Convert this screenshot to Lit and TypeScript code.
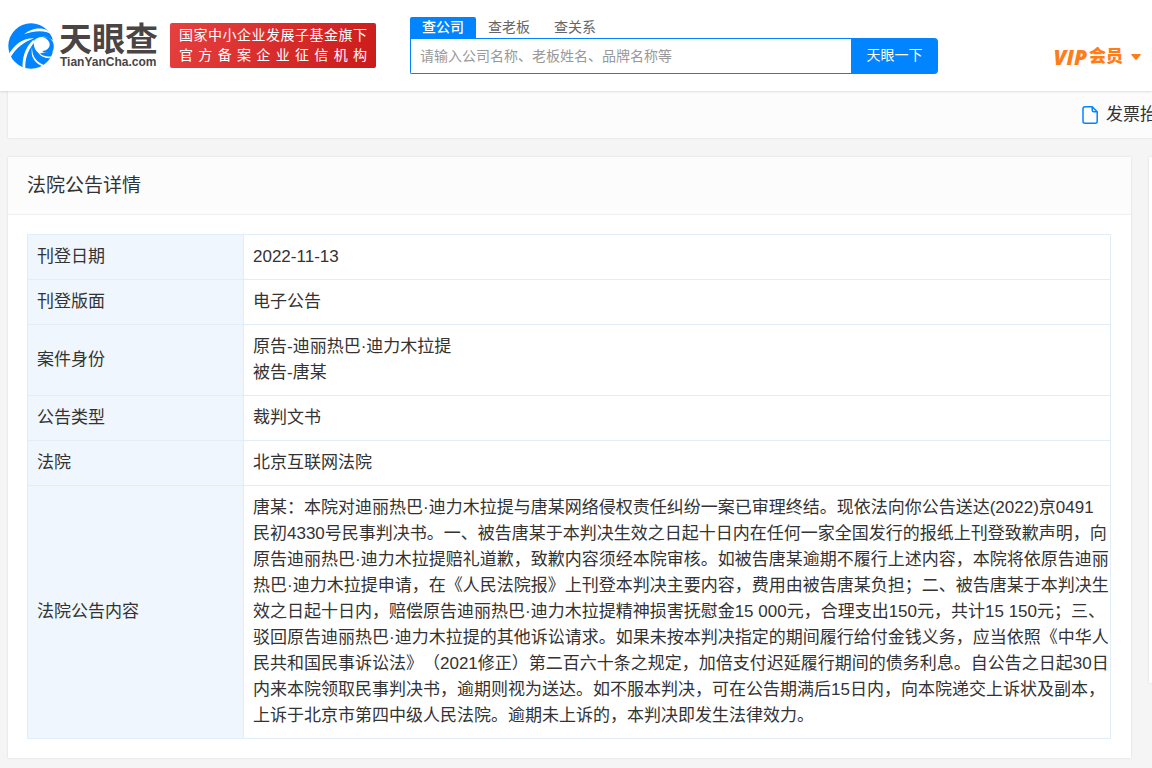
import { LitElement, html, css } from "lit";
import { customElement } from "lit/decorators.js";

interface Row {
  label: string;
  lines: string[];
}

const ROWS: Row[] = [
  { label: "刊登日期", lines: ["2022-11-13"] },
  { label: "刊登版面", lines: ["电子公告"] },
  { label: "案件身份", lines: ["原告-迪丽热巴·迪力木拉提", "被告-唐某"] },
  { label: "公告类型", lines: ["裁判文书"] },
  { label: "法院", lines: ["北京互联网法院"] },
  {
    label: "法院公告内容",
    lines: [
      "唐某：本院对迪丽热巴·迪力木拉提与唐某网络侵权责任纠纷一案已审理终结。现依法向你公告送达(2022)京0491",
      "民初4330号民事判决书。一、被告唐某于本判决生效之日起十日内在任何一家全国发行的报纸上刊登致歉声明，向",
      "原告迪丽热巴·迪力木拉提赔礼道歉，致歉内容须经本院审核。如被告唐某逾期不履行上述内容，本院将依原告迪丽",
      "热巴·迪力木拉提申请，在《人民法院报》上刊登本判决主要内容，费用由被告唐某负担；二、被告唐某于本判决生",
      "效之日起十日内，赔偿原告迪丽热巴·迪力木拉提精神损害抚慰金15 000元，合理支出150元，共计15 150元；三、",
      "驳回原告迪丽热巴·迪力木拉提的其他诉讼请求。如果未按本判决指定的期间履行给付金钱义务，应当依照《中华人",
      "民共和国民事诉讼法》（2021修正）第二百六十条之规定，加倍支付迟延履行期间的债务利息。自公告之日起30日",
      "内来本院领取民事判决书，逾期则视为送达。如不服本判决，可在公告期满后15日内，向本院递交上诉状及副本，",
      "上诉于北京市第四中级人民法院。逾期未上诉的，本判决即发生法律效力。",
    ],
  },
];

@customElement("site-header")
class SiteHeader extends LitElement {
  static styles = css`
    :host {
      display: block;
      position: relative;
      background: #fff;
      box-shadow: 0 1px 2px rgba(0, 0, 0, 0.12);
    }
    .bar {
      display: flex;
      align-items: center;
      height: 91px;
      padding: 0 10px 0 8px;
      box-sizing: border-box;
    }
    .logo {
      display: flex;
      align-items: center;
      gap: 5px;
      color: #4a4444;
      text-decoration: none;
    }
    .mark {
      width: 46px;
      height: 46px;
    }
    .names {
      display: flex;
      flex-direction: column;
      width: 98px;
      font-weight: 700;
      white-space: nowrap;
    }
    .cn {
      font-size: 33px;
      line-height: 32px;
    }
    .en {
      padding-left: 1px;
      font-size: 12px;
      line-height: 12px;
    }
    .badge {
      width: 188px;
      margin-left: 13px;
      padding: 2px 9px 3px;
      border-radius: 2px;
      background: linear-gradient(120deg, #e64040, #cb1a1a);
      color: #fff;
      font-size: 14px;
      line-height: 20px;
      white-space: nowrap;
    }
    .badge span {
      display: block;
      text-align: justify;
      text-align-last: justify;
    }
    .search {
      flex: 0 1 528px;
      margin-left: 34px;
      margin-bottom: 1px;
    }
    .tabs {
      display: flex;
    }
    .tab {
      border: 0;
      padding: 0 12px;
      height: 21px;
      background: none;
      color: #666;
      font: inherit;
      font-size: 14px;
      line-height: 21px;
      border-radius: 2px 2px 0 0;
    }
    .tab.on {
      background: #0084ff;
      color: #fff;
      font-weight: 500;
    }
    .field {
      display: flex;
    }
    .input {
      flex: 1;
      min-width: 0;
      height: 36px;
      box-sizing: border-box;
      border: 1px solid #0084ff;
      border-right: 0;
      border-radius: 0 0 0 2px;
      padding: 0 9px;
      font: inherit;
      font-size: 14px;
      outline: 0;
    }
    .input::placeholder {
      color: #999;
      opacity: 1;
    }
    .go {
      width: 87px;
      height: 36px;
      border: 0;
      padding: 0 0 3px;
      border-radius: 0 4px 4px 0;
      background: #0084ff;
      color: #fff;
      font: inherit;
      font-size: 14px;
    }
    .vip {
      display: flex;
      align-items: center;
      margin-left: auto;
      margin-top: 22px;
      color: #ff7d18;
      font-size: 17px;
      font-weight: 900;
      line-height: 26px;
      text-decoration: none;
      white-space: nowrap;
    }
    .vip em {
      margin-right: 2px;
      font-family: "Open Sans", sans-serif;
      font-size: 21px;
      font-weight: 800;
    }
    .caret {
      width: 12px;
      height: 8px;
      margin-left: 7px;
    }
  `;

  render() {
    return html`<header class="bar">
      <a class="logo" href="#">
        <svg class="mark" viewBox="0 0 138 138" aria-hidden="true">
          <circle cx="69" cy="69" r="68" fill="#0084ff" />
          <g fill="#fff">
            <path d="M48 34C64 19 88 14 104 17C116 19 124 26 130 34C112 21 80 22 48 34Z" />
            <path d="M80 50C92 40 112 38 124 46C132 50 140 56 140 62V84C130 88 108 86 96 92C84 88 72 68 80 50Z" />
            <path d="M0 98C20 62 46 45 78 46C50 56 24 74 6 106Z" />
            <path d="M44 136C42 104 52 72 76 50L80 58C62 78 50 106 52 138Z" />
            <path d="M72 72C72 102 86 118 112 128L108 132C82 122 66 104 72 72Z" />
            <path d="M90 88C104 100 122 104 136 98L134 104C118 108 100 104 90 88Z" />
          </g>
          <path d="M104 42C122 40 136 50 137 66C138 76 136 84 131 88C118 90 108 88 102 84C116 84 125 76 125 64C125 54 116 46 104 42Z" fill="#0084ff" />
        </svg>
        <span class="names"><span class="cn">天眼查</span><span class="en">TianYanCha.com</span></span>
      </a>
      <div class="badge"><span>国家中小企业发展子基金旗下</span><span>官方备案企业征信机构</span></div>
      <form class="search" @submit=${(e: Event) => e.preventDefault()}>
        <div class="tabs">
          <button type="button" class="tab on">查公司</button>
          <button type="button" class="tab">查老板</button>
          <button type="button" class="tab">查关系</button>
        </div>
        <div class="field">
          <input class="input" type="text" aria-label="查公司" placeholder="请输入公司名称、老板姓名、品牌名称等" />
          <button class="go">天眼一下</button>
        </div>
      </form>
      <a class="vip" href="#"><em>VIP</em>会员
        <svg class="caret" viewBox="0 0 12 8" aria-hidden="true"><path d="M1.8 1H10.2Q11.4 1 10.6 2L6.8 6.5Q6 7.4 5.2 6.5L1.4 2Q.6 1 1.8 1Z" fill="#ff7d18" /></svg>
      </a>
    </header>`;
  }
}

@customElement("notice-table")
class NoticeTable extends LitElement {
  static styles = css`
    :host {
      display: block;
    }
    .table {
      width: 100%;
      border-collapse: collapse;
      table-layout: fixed;
      font-size: 17px;
      line-height: 26px;
    }
    .label,
    .value {
      border: 1px solid #e1edf7;
      padding: 9px;
      text-align: left;
      font-weight: 400;
    }
    .value {
      padding-right: 0;
    }
    .label {
      width: 197px;
      background: #eff6fd;
    }
    .line {
      display: block;
      white-space: nowrap;
    }
  `;

  render() {
    return html`<table class="table">
      <tbody>
        ${ROWS.map(
          (r) => html`<tr>
            <th class="label" scope="row">${r.label}</th>
            <td class="value">${r.lines.map((l) => html`<span class="line">${l}</span>`)}</td>
          </tr>`
        )}
      </tbody>
    </table>`;
  }
}

@customElement("app-root")
class AppRoot extends LitElement {
  static styles = css`
    :host {
      display: block;
      min-height: 100vh;
      overflow: hidden;
      background: #f5f5f5;
      color: #333;
      font-family: "Liberation Sans", "Noto Sans CJK SC", sans-serif;
      text-spacing-trim: space-all;
    }
    .page {
      width: calc(100% + 300px);
      padding-left: 8px;
      box-sizing: border-box;
    }
    .card {
      background: #fff;
      box-shadow: 0 0 2px rgba(0, 0, 0, 0.12);
    }
    .tools {
      display: flex;
      justify-content: flex-end;
      height: 47px;
      padding-right: 278px;
      background: #fcfcfc;
    }
    .tool {
      display: flex;
      align-items: center;
      gap: 7px;
      color: #333;
      font-size: 17px;
      line-height: 26px;
      text-decoration: none;
    }
    .file {
      width: 18px;
      height: 20px;
    }
    .columns {
      display: grid;
      grid-template-columns: minmax(0, 1fr) 303px;
      gap: 18px;
      align-items: start;
      margin: 19px 0 10px;
    }
    .title {
      margin: 0;
      padding: 1px 19px 0;
      border-bottom: 1px solid #f0f0f0;
      background: #fcfcfc;
      font-size: 19px;
      font-weight: 400;
      line-height: 56px;
    }
    .body {
      padding: 19px 20px 19px 19px;
    }
    .side {
      height: 526px;
    }
  `;

  render() {
    return html`<site-header></site-header>
      <main class="page">
        <div class="card tools">
          <a class="tool" href="#">
            <svg class="file" viewBox="0 0 18 20" fill="none" stroke="#0084ff" stroke-width="1.5" stroke-linejoin="round" aria-hidden="true">
              <path d="M4 1.8H11.2L16.2 6.8V16.2Q16.2 18.2 14.2 18.2H4Q2 18.2 2 16.2V3.8Q2 1.8 4 1.8Z" />
              <path d="M11.2 1.8V5.2Q11.2 6.8 12.8 6.8H16.2" />
            </svg>
            发票抬头</a>
        </div>
        <div class="columns">
          <section class="card">
            <h2 class="title">法院公告详情</h2>
            <div class="body"><notice-table></notice-table></div>
          </section>
          <aside class="card side"></aside>
        </div>
      </main>`;
  }
}
